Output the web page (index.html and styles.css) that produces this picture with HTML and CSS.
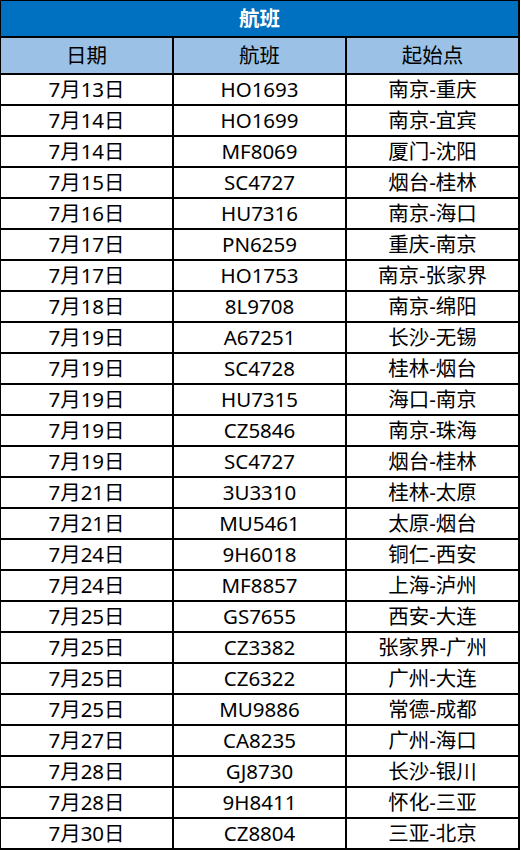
FILE: index.html
```html
<!DOCTYPE html>
<html lang="zh-CN">
<head>
<meta charset="utf-8">
<title>航班</title>
<link rel="stylesheet" href="styles.css">
</head>
<body>
<div class="sheet">
  <div class="cell title">航班</div>
  <div class="cell head">日期</div>
  <div class="cell head">航班</div>
  <div class="cell head">起始点</div>
  <div class="cell">7月13日</div><div class="cell">HO1693</div><div class="cell">南京-重庆</div>
  <div class="cell">7月14日</div><div class="cell">HO1699</div><div class="cell">南京-宜宾</div>
  <div class="cell">7月14日</div><div class="cell">MF8069</div><div class="cell">厦门-沈阳</div>
  <div class="cell">7月15日</div><div class="cell">SC4727</div><div class="cell">烟台-桂林</div>
  <div class="cell">7月16日</div><div class="cell">HU7316</div><div class="cell">南京-海口</div>
  <div class="cell">7月17日</div><div class="cell">PN6259</div><div class="cell">重庆-南京</div>
  <div class="cell">7月17日</div><div class="cell">HO1753</div><div class="cell">南京-张家界</div>
  <div class="cell">7月18日</div><div class="cell">8L9708</div><div class="cell">南京-绵阳</div>
  <div class="cell">7月19日</div><div class="cell">A67251</div><div class="cell">长沙-无锡</div>
  <div class="cell">7月19日</div><div class="cell">SC4728</div><div class="cell">桂林-烟台</div>
  <div class="cell">7月19日</div><div class="cell">HU7315</div><div class="cell">海口-南京</div>
  <div class="cell">7月19日</div><div class="cell">CZ5846</div><div class="cell">南京-珠海</div>
  <div class="cell">7月19日</div><div class="cell">SC4727</div><div class="cell">烟台-桂林</div>
  <div class="cell">7月21日</div><div class="cell">3U3310</div><div class="cell">桂林-太原</div>
  <div class="cell">7月21日</div><div class="cell">MU5461</div><div class="cell">太原-烟台</div>
  <div class="cell">7月24日</div><div class="cell">9H6018</div><div class="cell">铜仁-西安</div>
  <div class="cell">7月24日</div><div class="cell">MF8857</div><div class="cell">上海-泸州</div>
  <div class="cell">7月25日</div><div class="cell">GS7655</div><div class="cell">西安-大连</div>
  <div class="cell">7月25日</div><div class="cell">CZ3382</div><div class="cell">张家界-广州</div>
  <div class="cell">7月25日</div><div class="cell">CZ6322</div><div class="cell">广州-大连</div>
  <div class="cell">7月25日</div><div class="cell">MU9886</div><div class="cell">常德-成都</div>
  <div class="cell">7月27日</div><div class="cell">CA8235</div><div class="cell">广州-海口</div>
  <div class="cell">7月28日</div><div class="cell">GJ8730</div><div class="cell">长沙-银川</div>
  <div class="cell">7月28日</div><div class="cell">9H8411</div><div class="cell">怀化-三亚</div>
  <div class="cell">7月30日</div><div class="cell">CZ8804</div><div class="cell">三亚-北京</div>
</div>
</body>
</html>
```
FILE: styles.css
```css
html, body {
  margin: 0;
  padding: 0;
  background: #ffffff;
}

body {
  font-family: "Noto Sans", "Noto Sans CJK SC", sans-serif;
  font-size: 20.5px;
  color: #000000;
  overflow: hidden;
}

.sheet {
  display: grid;
  grid-template-columns: 171px 171px 171px;
  grid-template-rows: 35px 35px repeat(25, 29px);
  gap: 2px;
  padding: 2px;
  margin: -1px 0 0 -1px;
  width: max-content;
  background: #000000;
}

.cell {
  background: #ffffff;
  display: flex;
  align-items: center;
  justify-content: center;
  line-height: 1;
  white-space: nowrap;
}

.title {
  grid-column: 1 / 4;
  background: #0070c0;
  color: #ffffff;
  font-weight: bold;
}

.head {
  background: #9bc2e6;
}
```
